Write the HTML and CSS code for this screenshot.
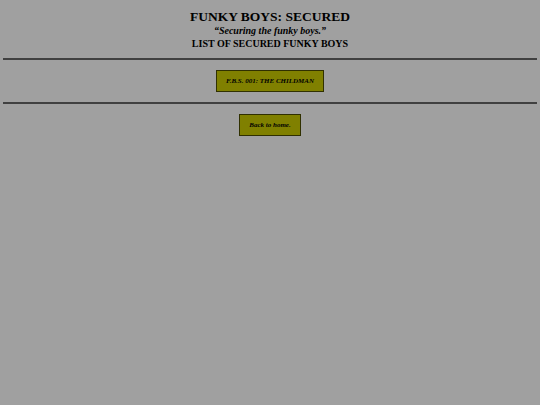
FILE: index.html
```html
<!DOCTYPE html>
<html lang="en">
<head>
    <meta charset="UTF-8">
    <title>Funky Boys: Secured</title>
    <link rel="stylesheet" href="styles.css">
</head>
<body>

<div class="header">
    <h1>FUNKY BOYS: SECURED</h1>
    <p class="motto">&ldquo;Securing the funky boys.&rdquo;</p>
    <h2>LIST OF SECURED FUNKY BOYS</h2>
</div>
<hr>
<div class="list">
    <a class="button" href="#">F.B.S. 001: THE CHILDMAN</a>
</div>
<hr>
<div class="list">
    <a class="button" href="#">Back to home.</a>
</div>

</body>
</html>
```

FILE: styles.css
```css
body {
    font-family: "Liberation Serif", "Times New Roman", serif;
    margin: 0;
    padding: 9px 3px;
    background-color: #a0a0a0;
    color: #000;
}
.header {
    text-align: center;
    margin-bottom: 8px;
}
h1 {
    font-size: 13.5px;
    margin: 0;
    line-height: 15px;
}
.motto {
    font-size: 10px;
    font-style: italic;
    font-weight: bold;
    margin: 0;
    line-height: 13px;
}
h2 {
    font-size: 10px;
    margin: 0;
    line-height: 13px;
}
hr {
    border: none;
    border-top: 2px solid #404040;
    margin: 0;
    height: 0;
}
.list {
    display: flex;
    justify-content: center;
    padding: 10px 0;
}
.button {
    display: block;
    background-color: #808000; /* olive */
    border: 1px solid #303000;
    color: #000;
    font-size: 7px;
    font-style: italic;
    font-weight: bold;
    text-decoration: none;
    padding: 6px 9px;
    line-height: 8px;
}
```
